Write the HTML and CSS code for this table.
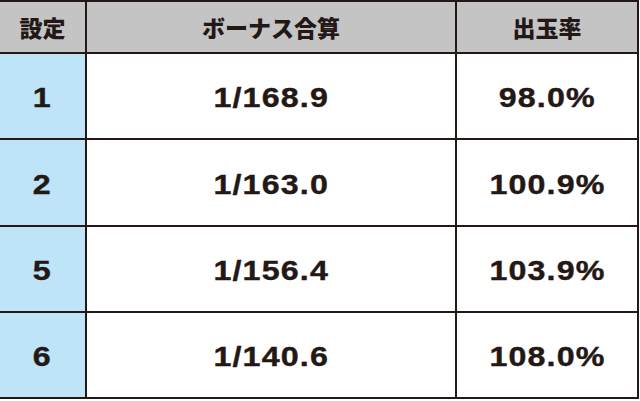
FILE: index.html
```html
<!DOCTYPE html>
<html lang="ja">
<head>
<meta charset="utf-8">
<link rel="stylesheet" href="styles.css">
</head>
<body>
<div class="table">
  <div class="cell head">設定</div>
  <div class="cell head">ボーナス合算</div>
  <div class="cell head">出玉率</div>

  <div class="cell set"><span class="v">1</span></div>
  <div class="cell num"><span class="v">1/168.9</span></div>
  <div class="cell num"><span class="v">98.0%</span></div>

  <div class="cell set"><span class="v">2</span></div>
  <div class="cell num"><span class="v">1/163.0</span></div>
  <div class="cell num"><span class="v">100.9%</span></div>

  <div class="cell set"><span class="v">5</span></div>
  <div class="cell num"><span class="v">1/156.4</span></div>
  <div class="cell num"><span class="v">103.9%</span></div>

  <div class="cell set"><span class="v">6</span></div>
  <div class="cell num"><span class="v">1/140.6</span></div>
  <div class="cell num"><span class="v">108.0%</span></div>
</div>
</body>
</html>
```
FILE: styles.css
```css
html, body {
  margin: 0;
  padding: 0;
  background: #ffffff;
}
.table {
  width: 637px;
  display: grid;
  grid-template-columns: 85px 368px 180px;
  grid-template-rows: 50px 84px 85px 84px 84px;
  gap: 2px;
  padding: 2px 2px 2px 0;
  background: #231815;
}
.cell {
  display: flex;
  align-items: center;
  justify-content: center;
  background: #ffffff;
  color: #231815;
  font-family: "Liberation Sans", Arial, sans-serif;
  font-weight: bold;
}
.head {
  background: #c4c4c4;
  font-family: "Noto Sans CJK JP", sans-serif;
  font-size: 23px;
  font-weight: 900;
}
.set {
  background: #bfe3f7;
}
.num, .set {
  font-size: 28px;
  padding-top: 4px;
}
.v {
  display: inline-block;
  letter-spacing: 1px;
  transform: scaleX(1.15);
  -webkit-text-stroke: 0.4px #231815;
}
```
